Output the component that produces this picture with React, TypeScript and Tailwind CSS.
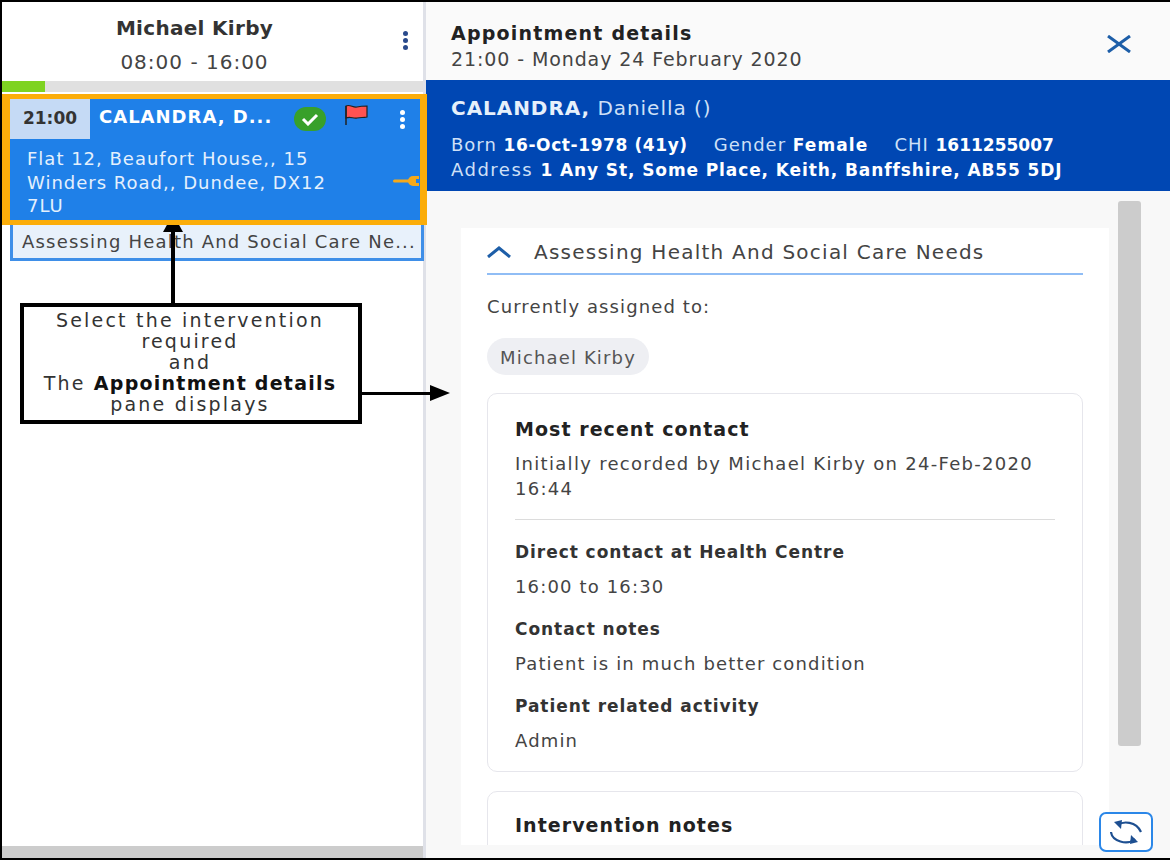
function Dots({ className }: { className: string }) {
  return (
    <div className={`flex flex-col gap-[2px] ${className}`}>
      <span className="h-[5px] w-[5px] rounded-full bg-current" />
      <span className="h-[5px] w-[5px] rounded-full bg-current" />
      <span className="h-[5px] w-[5px] rounded-full bg-current" />
    </div>
  )
}

function Field({ label, value }: { label: string; value: string }) {
  return (
    <div className="mb-[18px]">
      <p className="text-[17px] font-bold leading-[24px] tracking-[0.95px] text-[#333]">{label}</p>
      <p className="mt-[11px] text-[18px] leading-[24px] tracking-[1.15px] text-[#444]">{value}</p>
    </div>
  )
}

function Callout() {
  return (
    <>
      <div className="absolute left-[161px] top-[212px] flex flex-col items-center">
        <div className="h-0 w-0 border-x-[10px] border-b-[18px] border-x-transparent border-b-black" />
        <div className="h-[72px] w-[4px] bg-black" />
      </div>
      <div className="absolute left-[18px] top-[301px] flex h-[121px] w-[342px] flex-col items-center justify-center border-[4px] border-black bg-white pb-[2px] pr-[2px] text-center text-[19px] leading-[21px] tracking-[2.2px] text-[#333]">
        <p>Select the intervention</p>
        <p>required</p>
        <p>and</p>
        <p>
          The <b className="font-bold tracking-[1.25px] text-[#111]">Appointment details</b>
        </p>
        <p>pane displays</p>
      </div>
      <div className="absolute left-[358px] top-[383px] flex items-center">
        <div className="h-[3px] w-[70px] bg-black" />
        <div className="h-0 w-0 border-y-[8px] border-l-[20px] border-y-transparent border-l-black" />
      </div>
    </>
  )
}

function LeftColumn() {
  return (
    <div className="relative flex h-full w-[421px] shrink-0 flex-col bg-white">
      <div className="relative flex h-[79px] shrink-0 flex-col items-center pr-[36px] pt-[12px]">
        <p className="text-[20px] font-bold leading-[28px] tracking-[0.3px] text-[#333]">Michael Kirby</p>
        <p className="mt-[6px] text-[20px] leading-[28px] tracking-[1px] text-[#444]">08:00 - 16:00</p>
        <Dots className="absolute right-[15px] top-[29px] text-[#2a4a8c]" />
      </div>
      <div className="h-[11px] shrink-0 bg-[#e0e0e0]">
        <div className="h-full w-[43px] bg-[#7ed321]" />
      </div>
      <div className="relative z-10 mt-[2px] h-[131px] w-[425px] shrink-0 border-y-[5px] border-l-[8px] border-r-[7px] border-[#fbad0a] bg-[#1f80e8]">
        <div className="flex h-[40px] items-start">
          <div className="flex h-full w-[80px] items-center justify-center bg-[#c5daf5] text-[17px] font-semibold text-[#333]">21:00</div>
          <p className="ml-[9px] mt-[5px] text-[18px] font-bold leading-[26px] tracking-[1px] text-white">CALANDRA, D...</p>
          <div className="absolute left-[284px] top-[8px] flex h-[24px] w-[32px] items-center justify-center rounded-full bg-[#38a02a]">
            <svg width="20" height="14" viewBox="0 0 20 14" fill="none" stroke="white" strokeWidth="3">
              <path d="M3 7l5 5 9-9" />
            </svg>
          </div>
          <svg className="absolute left-[334px] top-[5px]" width="26" height="22" viewBox="0 0 26 22">
            <path d="M2 2c4-2 7 2 11 1s6-1 10-1v11c-4 1-6 0-10 1s-6-2-11 0z" fill="#ff5252" stroke="#222" strokeWidth="1.2" />
            <path d="M2 2v19" stroke="#222" strokeWidth="1.5" />
          </svg>
          <Dots className="absolute left-[390px] top-[11px] text-white" />
        </div>
        <p className="ml-[17px] mt-[8px] w-[325px] text-[18px] leading-[23.5px] tracking-[1px] text-[#e4f0fd]">
          Flat 12, Beaufort House,, 15 Winders Road,, Dundee, DX12 7LU
        </p>
        <svg className="absolute left-[383px] top-[75px]" width="26" height="14" viewBox="0 0 26 14">
          <path d="M1.5 7h15" stroke="#f5a91a" strokeWidth="3" strokeLinecap="round" />
          <path d="M15 7a5 5 0 0 1 5-5h6v3h-3v4h3v3h-6a5 5 0 0 1-5-5z" fill="#f5a91a" />
        </svg>
      </div>
      <div className="ml-[8px] flex h-[36px] w-[414px] shrink-0 items-center truncate border-[3px] border-t-0 border-[#3f8fe8] bg-[#e8f1fb] pl-[9px] text-[18px] tracking-[1.2px] text-[#444]">
        Assessing Health And Social Care Ne...
      </div>
      <div className="flex-1" />
      <div className="h-[12px] shrink-0 bg-[#cccccc]" />
    </div>
  )
}

function DetailsHeader() {
  return (
    <>
      <div className="flex h-[78px] shrink-0 items-start justify-between bg-[#fafafa] pl-[25px] pr-[39px] pt-[18px]">
        <div>
          <p className="text-[19px] font-bold leading-[26px] tracking-[1.2px] text-[#222]">Appointment details</p>
          <p className="text-[19px] leading-[26px] tracking-[0.9px] text-[#444]">21:00 - Monday 24 February 2020</p>
        </div>
        <svg className="mt-[15px]" width="24" height="18" viewBox="0 0 24 18" fill="none" stroke="#1d5ea8" strokeWidth="3">
          <path d="M1 1l22 16M23 1L1 17" />
        </svg>
      </div>
      <div className="h-[111px] shrink-0 bg-[#0047b3] pl-[25px] pt-[14px] text-[#cfe0f7]">
        <p className="text-[20px] leading-[28px] tracking-[0.95px]">
          <span className="font-bold text-[#e6f0fb]">CALANDRA,</span> Daniella ()
        </p>
        <div className="mt-[10px] flex gap-[26px] text-[18px] leading-[25px] tracking-[1px]">
          <p>Born <b className="text-[17px] font-bold tracking-[0.6px] text-white">16-Oct-1978 (41y)</b></p>
          <p>Gender <b className="text-[17px] font-bold tracking-[1.1px] text-white">Female</b></p>
          <p>CHI <b className="text-[17px] font-bold tracking-normal text-white">1611255007</b></p>
        </div>
        <p className="-mt-px whitespace-nowrap text-[18px] leading-[25px] tracking-[1.5px]">
          Address <b className="text-[17px] font-bold tracking-[0.9px] text-white">1 Any St, Some Place, Keith, Banffshire, AB55 5DJ</b>
        </p>
      </div>
    </>
  )
}

function DetailsBody() {
  return (
    <div className="flex min-h-0 flex-1 bg-[#f8f8f8] pl-[35px] pt-[10px]">
      <div className="mt-[27px] h-[617px] w-[648px] shrink-0 overflow-hidden bg-white px-[26px]">
        <div className="flex h-[47px] items-center border-b-[2px] border-[#90bdf5] pt-[2px]">
          <svg width="24" height="12" viewBox="0 0 24 12" fill="none" stroke="#1d5ea8" strokeWidth="3">
            <path d="M1 11l11-9 11 9" />
          </svg>
          <p className="ml-[23px] text-[20px] leading-[28px] tracking-[1.24px] text-[#444]">Assessing Health And Social Care Needs</p>
        </div>
        <p className="mt-[20px] text-[18px] leading-[24px] tracking-[1.1px] text-[#444]">Currently assigned to:</p>
        <div className="mt-[19px] flex h-[37px] w-[162px] items-center justify-center rounded-full bg-[#eeeff3] pt-[1px] text-[18px] tracking-[1.15px] text-[#555]">
          Michael Kirby
        </div>
        <div className="mt-[18px] h-[379px] rounded-[10px] border border-[#e6e6ec] px-[27px] pt-[21px]">
          <p className="text-[19px] font-bold leading-[28px] tracking-[1.05px] text-[#222]">Most recent contact</p>
          <p className="mt-[9px] text-[18px] leading-[24.5px] tracking-[1.3px] text-[#444]">
            Initially recorded by Michael Kirby on 24-Feb-2020 16:44
          </p>
          <div className="mb-[20px] mt-[18px] h-px bg-[#dcdcdc]" />
          <Field label="Direct contact at Health Centre" value="16:00 to 16:30" />
          <Field label="Contact notes" value="Patient is in much better condition" />
          <Field label="Patient related activity" value="Admin" />
        </div>
        <div className="mt-[19px] h-[100px] rounded-[10px] border border-[#e6e6ec] px-[27px] pt-[19px]">
          <p className="text-[19px] font-bold leading-[28px] tracking-[1.05px] text-[#222]">Intervention notes</p>
        </div>
      </div>
      <div className="ml-[9px] h-[545px] w-[23px] shrink-0 rounded-[3px] bg-[#cccccc]" />
    </div>
  )
}

export default function App() {
  return (
    <div className="relative flex h-[860px] w-[1170px] overflow-hidden border-y-[2px] border-l-[2px] border-black font-['DejaVu_Sans',sans-serif]">
      <LeftColumn />
      <div className="h-full w-[3px] shrink-0 bg-[#dfe1e8]" />
      <div className="flex h-full min-w-0 flex-1 flex-col">
        <DetailsHeader />
        <DetailsBody />
      </div>
      <Callout />
      <div className="absolute left-[1097px] top-[810px] flex h-[40px] w-[54px] items-center justify-center rounded-[7px] border-[2px] border-[#2b87e8] bg-white">
        <svg width="32" height="26" viewBox="0 0 32 26" fill="none" stroke="#1d4f91" strokeWidth="2.2">
          <path d="M8 6C13 2 26 2 31 13" />
          <path d="M1 13C2 22 17 27 25 20" />
          <path d="M4 3l8-2-1 9z" fill="#1d4f91" stroke="none" />
          <path d="M28 23l-8 2 1-9z" fill="#1d4f91" stroke="none" />
        </svg>
      </div>
    </div>
  )
}
